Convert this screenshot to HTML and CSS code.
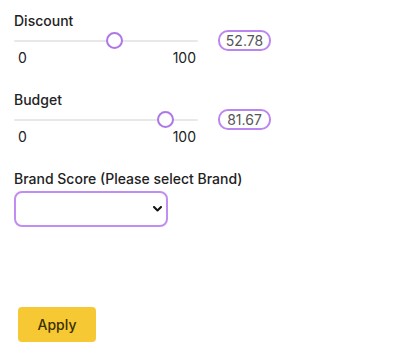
FILE: index.html
```html
<!DOCTYPE html>
<html lang="en">
<head>
  <meta charset="UTF-8">
  <title>Filters</title>
  <link rel="stylesheet" href="styles.css">
</head>
<body>
<main class="filters">
  <div class="slider-field">
    <label class="field-label" for="discount">Discount</label>
    <div class="slider-grid">
      <input class="range" id="discount" type="range" min="0" max="100" step="any" value="54.8">
      <span class="value-pill">52.78</span>
      <div class="scale"><span>0</span><span>100</span></div>
    </div>
  </div>

  <div class="slider-field">
    <label class="field-label" for="budget">Budget</label>
    <div class="slider-grid">
      <input class="range" id="budget" type="range" min="0" max="100" step="any" value="85.7">
      <span class="value-pill">81.67</span>
      <div class="scale"><span>0</span><span>100</span></div>
    </div>
  </div>

  <div class="select-field">
    <label class="field-label" for="brand">Brand Score (Please select Brand)</label>
    <div class="select-wrap">
      <select id="brand" class="select"><option></option></select>
      <svg class="chevron" width="9" height="6" viewBox="0 0 9 6"><path d="M1 1l3.5 3.5L8 1" fill="none" stroke="#111" stroke-width="2" stroke-linecap="round" stroke-linejoin="round"/></svg>
    </div>
  </div>

  <button class="btn-apply" type="button">Apply</button>
</main>
</body>
</html>
```

FILE: styles.css
```css
body { margin: 0; background: #fff; font-family: Inter, "Liberation Sans", Arial, sans-serif; color: #222; }
.filters { padding: 12px 14px; }
.field-label { display: block; font-size: 14px; line-height: 18px; font-weight: 500; color: #222; }

.slider-field { margin-bottom: 26px; }
.slider-grid { display: grid; grid-template-columns: 184px auto; column-gap: 20px; align-items: center; justify-items: start; }
.range { -webkit-appearance: none; appearance: none; width: 184px; height: 17px; margin: 0; background: transparent; }
.range::-webkit-slider-runnable-track { height: 2px; background: #e8e8e8; border-radius: 1px; }
.range::-webkit-slider-thumb { -webkit-appearance: none; width: 17px; height: 17px; margin-top: -7.5px; border-radius: 50%; background: #fff; border: 2px solid #ad78e6; box-sizing: border-box; }
.value-pill { box-sizing: border-box; width: 53px; height: 21px; border: 2px solid #bb86ef; border-radius: 10px; font-size: 14px; line-height: 17px; color: #555; text-align: center; }
.scale { display: flex; justify-content: space-between; width: 178px; padding-left: 4px; font-size: 14px; line-height: 14px; color: #222; }

.select-field { margin-top: 3px; }
.select-wrap { position: relative; width: 154px; margin-top: 3px; }
.select { -webkit-appearance: none; appearance: none; display: block; width: 154px; height: 36px; border: 2px solid #c08ef3; border-radius: 8px; background: #fff; font: inherit; }
.chevron { position: absolute; right: 6px; top: 15px; pointer-events: none; }

.btn-apply { display: block; margin: 80px 0 0 4px; width: 78px; height: 35px; border: none; border-radius: 4px; background: #f6c833; color: #3b3100; font-family: inherit; font-size: 14px; font-weight: 500; }
```
